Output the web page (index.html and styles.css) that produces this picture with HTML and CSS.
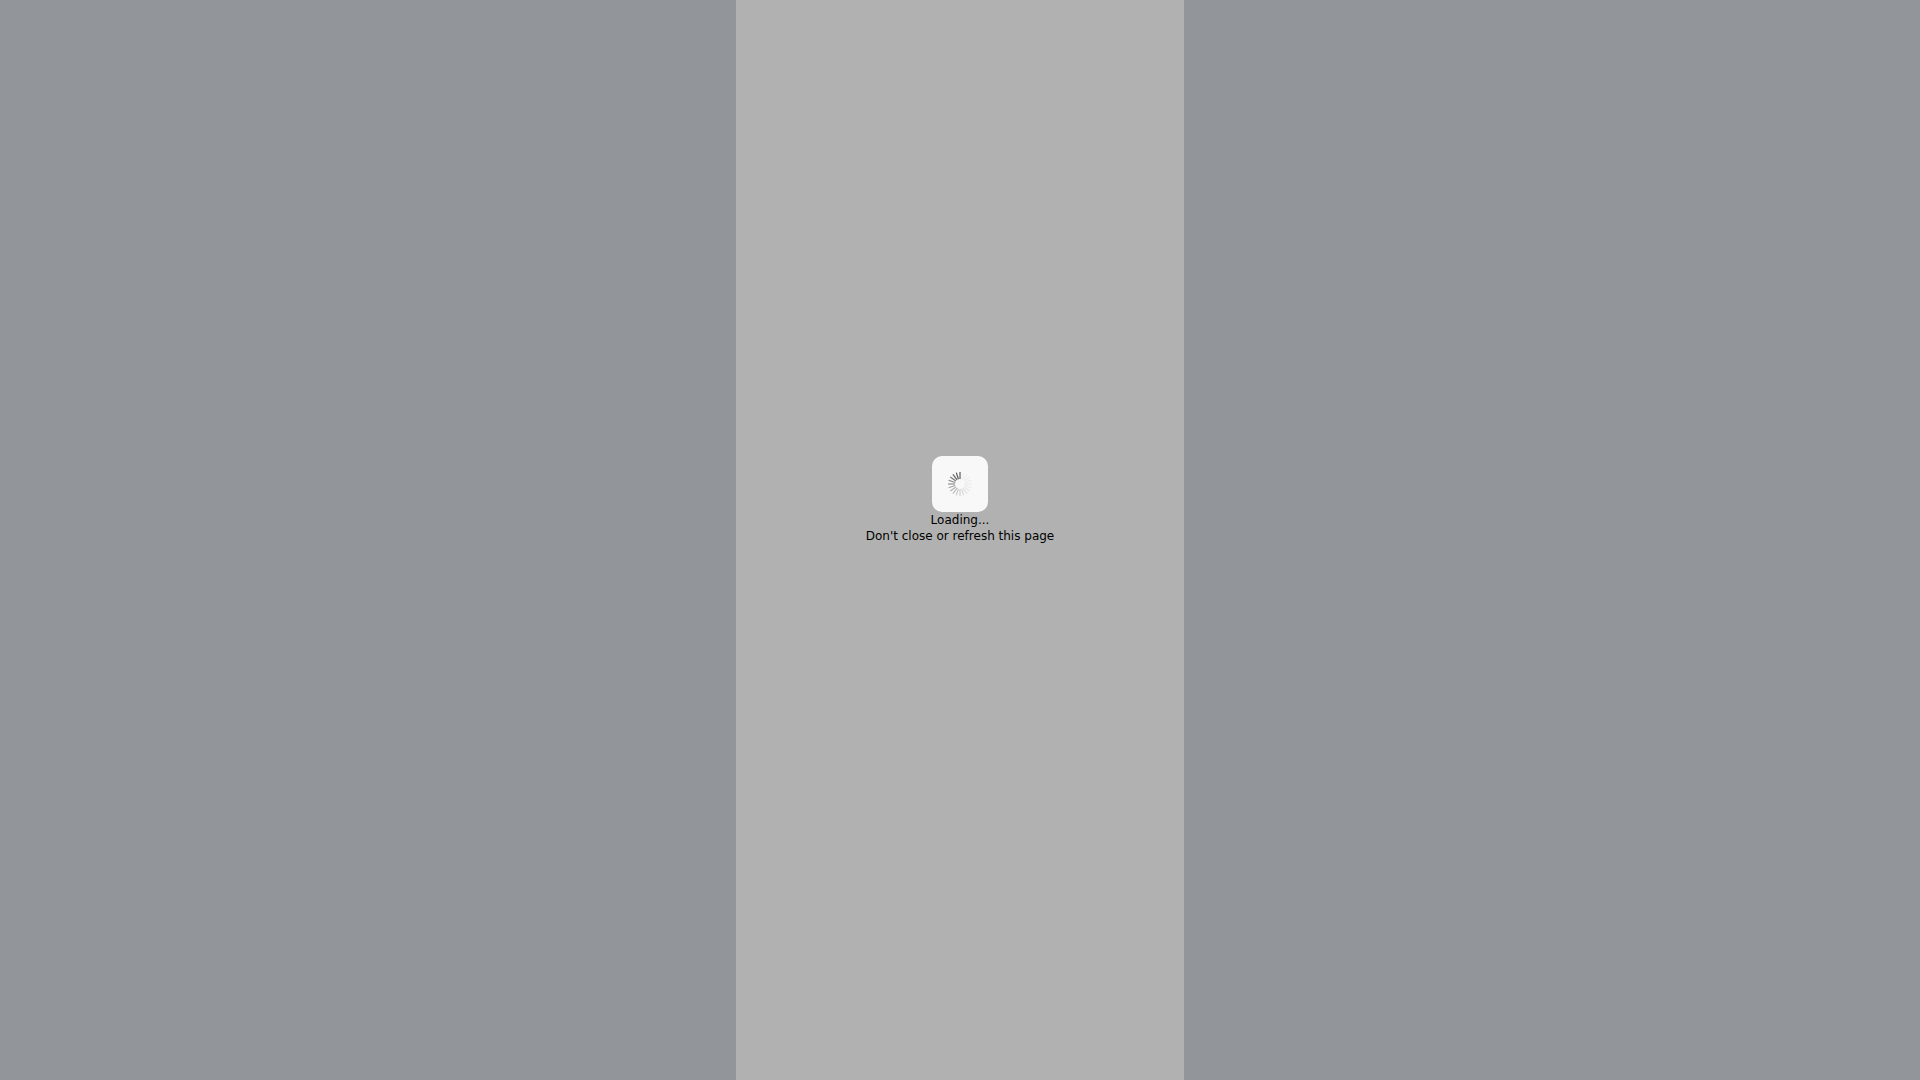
FILE: index.html
```html
<!DOCTYPE html>
<html lang="en">
<head>
<meta charset="utf-8">
<title>Loading</title>
<link rel="stylesheet" href="styles.css">
</head>
<body>
<main class="page">
  <section class="column">
    <div class="loader">
      <div class="spinner-box">
        <svg class="spinner" viewBox="0 0 28 28" width="28" height="28" aria-hidden="true">
          <g stroke="#5a5a5a" stroke-width="1.2" stroke-linecap="butt">
            <line x1="14" y1="9" x2="14" y2="2" transform="rotate(0 14 14)" stroke-opacity="1"/>
            <line x1="14" y1="9" x2="14" y2="2" transform="rotate(-18 14 14)" stroke-opacity="1"/>
            <line x1="14" y1="9" x2="14" y2="2" transform="rotate(-36 14 14)" stroke-opacity=".92"/>
            <line x1="14" y1="9" x2="14" y2="2" transform="rotate(-54 14 14)" stroke-opacity=".82"/>
            <line x1="14" y1="9" x2="14" y2="2" transform="rotate(-72 14 14)" stroke-opacity=".72"/>
            <line x1="14" y1="9" x2="14" y2="2" transform="rotate(-90 14 14)" stroke-opacity=".62"/>
            <line x1="14" y1="9" x2="14" y2="2" transform="rotate(-108 14 14)" stroke-opacity=".53"/>
            <line x1="14" y1="9" x2="14" y2="2" transform="rotate(-126 14 14)" stroke-opacity=".44"/>
            <line x1="14" y1="9" x2="14" y2="2" transform="rotate(-144 14 14)" stroke-opacity=".36"/>
            <line x1="14" y1="9" x2="14" y2="2" transform="rotate(-162 14 14)" stroke-opacity=".29"/>
            <line x1="14" y1="9" x2="14" y2="2" transform="rotate(-180 14 14)" stroke-opacity=".23"/>
            <line x1="14" y1="9" x2="14" y2="2" transform="rotate(-198 14 14)" stroke-opacity=".18"/>
            <line x1="14" y1="9" x2="14" y2="2" transform="rotate(-216 14 14)" stroke-opacity=".14"/>
            <line x1="14" y1="9" x2="14" y2="2" transform="rotate(-234 14 14)" stroke-opacity=".11"/>
            <line x1="14" y1="9" x2="14" y2="2" transform="rotate(-252 14 14)" stroke-opacity=".09"/>
            <line x1="14" y1="9" x2="14" y2="2" transform="rotate(-270 14 14)" stroke-opacity=".08"/>
            <line x1="14" y1="9" x2="14" y2="2" transform="rotate(-288 14 14)" stroke-opacity=".07"/>
            <line x1="14" y1="9" x2="14" y2="2" transform="rotate(-306 14 14)" stroke-opacity=".06"/>
            <line x1="14" y1="9" x2="14" y2="2" transform="rotate(-324 14 14)" stroke-opacity=".05"/>
            <line x1="14" y1="9" x2="14" y2="2" transform="rotate(-342 14 14)" stroke-opacity=".04"/>
          </g>
        </svg>
      </div>
      <p class="message">Loading...</p>
      <p class="message">Don't close or refresh this page</p>
    </div>
  </section>
</main>
</body>
</html>
```

FILE: styles.css
```css
html, body {
  margin: 0;
  height: 100%;
}
body {
  background: #929599;
  font-family: "DejaVu Sans", sans-serif;
  font-size: 12px;
  line-height: 16px;
  color: #000;
}
.page {
  display: flex;
  justify-content: center;
  height: 100vh;
}
.column {
  width: 448px;
  background: #b1b1b1;
  display: flex;
  justify-content: center;
  align-items: center;
  padding-bottom: 80px;
  box-sizing: border-box;
}
.loader {
  display: flex;
  flex-direction: column;
  align-items: center;
  text-align: center;
}
.spinner-box {
  width: 56px;
  height: 56px;
  border-radius: 10px;
  background: #f8f8f8;
  display: flex;
  align-items: center;
  justify-content: center;
}
.message {
  margin: 0;
}
```
